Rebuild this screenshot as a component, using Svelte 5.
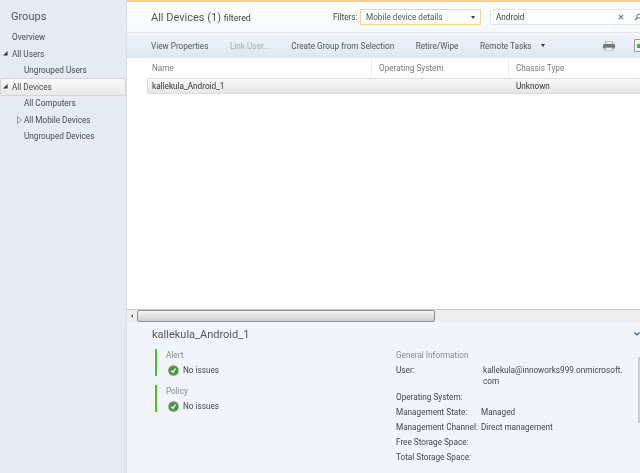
<script>
  const tools = ['View Properties', 'Link User...', 'Create Group from Selection', 'Retire/Wipe', 'Remote Tasks'];
</script>

<div class="app">
  <aside class="side">
    <h2>Groups</h2>
    <ul>
      <li class="l0 noarrow">Overview</li>
      <li class="l0"><svg class="tri" viewBox="0 0 6 6"><path d="M0 5.500 5.500 5.500 5.500 0Z" fill="#333"/></svg>All Users</li>
      <li class="l1">Ungrouped Users</li>
      <li class="l0 sel"><svg class="tri" viewBox="0 0 6 6"><path d="M0 5.500 5.500 5.500 5.500 0Z" fill="#333"/></svg>All Devices</li>
      <li class="l1">All Computers</li>
      <li class="l1 exp"><svg class="tri2" viewBox="0 0 5 8"><path d="M.5.5 4.500 4 .5 7.500Z" fill="#fff" stroke="#777" stroke-width=".8"/></svg>All Mobile Devices</li>
      <li class="l1">Ungrouped Devices</li>
    </ul>
  </aside>

  <main class="main">
    <header class="head">
      <div class="title">All Devices (1) <small>filtered</small></div>
      <div class="filters">
        <span class="flabel">Filters:</span>
        <div class="select"><span>Mobile device details</span><i class="caret"></i></div>
        <div class="search">
          <span>Android</span>
          <svg class="x" viewBox="0 0 7 7"><path d="M1 1 6 6M6 1 1 6" stroke="#3f78b8" stroke-width="1.200"/></svg>
          <svg class="mag" viewBox="0 0 9 9"><circle cx="5.500" cy="3.500" r="2.300" fill="none" stroke="#3f78b8" stroke-width="1.100"/><path d="M4 5 1 8" stroke="#3f78b8" stroke-width="1.400"/></svg>
        </div>
      </div>
    </header>

    <nav class="bar">
      {#each tools as t}
        <span class="tool" class:off={t === 'Link User...'}>{t}</span>
      {/each}
      <i class="caret dark"></i>
      <div class="icons">
        <svg class="print" viewBox="0 0 12 10">
          <rect x="2.500" y="0" width="7" height="3.500" fill="#e8e8e8" stroke="#888" stroke-width=".6"/>
          <rect x="0" y="3" width="12" height="4.500" rx="1" fill="#777"/>
          <rect x="2.500" y="6.500" width="7" height="3.500" fill="#eee" stroke="#999" stroke-width=".6"/>
        </svg>
        <svg class="xl" viewBox="0 0 10 13">
          <path d="M.5.5H9.500V12.500H.5Z" fill="#f4f4f4" stroke="#999"/>
          <rect x="3" y="5" width="7" height="4" fill="#4fb04a"/>
        </svg>
      </div>
    </nav>

    <section class="grid">
      <div class="cols">
        <div class="c name">Name</div>
        <div class="c os">Operating System</div>
        <div class="c ch">Chassis Type</div>
      </div>
      <div class="row">
        <div class="name">kallekula_Android_1</div>
        <div class="os"></div>
        <div class="ch">Unknown</div>
      </div>
    </section>

    <div class="hscroll">
      <span class="larr"></span>
      <div class="thumb"></div>
    </div>

    <section class="detail">
      <span class="chev"><svg viewBox="0 0 6 4"><path d="M.5.5 3 3 5.500.5" fill="none" stroke="#2a5a94" stroke-width="1.200"/></svg></span>
      <h3>kallekula_Android_1</h3>
      <div class="dcols">
        <div class="statuses">
          {#each ['Alert', 'Policy'] as s}
            <div class="status">
              <div class="slabel">{s}</div>
              <div class="sval">
                <svg class="ok" viewBox="0 0 12 12">
                  <circle cx="6" cy="6" r="5.800" fill="#7d8b7d"/>
                  <circle cx="6" cy="6" r="4.300" fill="#3f9c35"/>
                  <path d="M3.800 6 5.500 8 8.200 3.800" fill="none" stroke="#fff" stroke-width="1.400"/>
                </svg>
                No issues
              </div>
            </div>
          {/each}
        </div>
        <div class="info">
          <div class="slabel gi">General Information</div>
          <div class="kv user"><span class="k">User:</span><span class="v u">kallekula@innoworks999.onmicrosoft.<br />com</span></div>
          <div class="kv"><span class="k">Operating System:</span></div>
          <div class="kv"><span class="k">Management State:</span><span class="v">Managed</span></div>
          <div class="kv"><span class="k">Management Channel:</span><span class="v">Direct management</span></div>
          <div class="kv"><span class="k">Free Storage Space:</span></div>
          <div class="kv"><span class="k">Total Storage Space:</span></div>
        </div>
        <div class="vscroll"></div>
      </div>
    </section>
  </main>
</div>

<style>
  :global(body) { margin: 0; overflow: hidden; }
  .app {
    width: 640px; height: 473px; display: flex; overflow: hidden;
    font-family: Roboto, "Open Sans", sans-serif; font-size: 8.200px; color: #444;
    background: #fff; filter: blur(0.3px);
  }
  .side {
    width: 126px; flex: none; background: #e4ebf4; border-right: 1px solid #d4dce6;
    padding-top: 9px; box-sizing: content-box;
  }
  .side h2 { margin: 0 0 0 11px; font-weight: 400; font-size: 11px; line-height: 15px; color: #555; }
  .side ul { list-style: none; margin: 5px 0 0; padding: 0; }
  .side li { height: 16.500px; line-height: 16px; white-space: nowrap; position: relative; color: #4a4a4a; }
  .l0 { padding-left: 12px; }
  .l1 { padding-left: 24px; }
  .sel {
    margin-left: 1px; margin-right: 1px; padding-left: 11px; border-radius: 2px;
    background: linear-gradient(#fafafa, #e9e9e9); box-shadow: 0 0 0 1px #d2d6da;
  }
  .tri { position: absolute; left: 3px; top: 5px; width: 5px; height: 5px; }
  .sel .tri { left: 2px; }
  .tri2 { position: absolute; left: 17px; top: 4px; width: 5px; height: 8px; }

  .main { flex: 1; min-width: 0; display: flex; flex-direction: column; overflow: hidden; }
  .head {
    height: 30px; flex: none; border-top: 2px solid #fbcd85; border-bottom: 1px solid #dfe3e8;
    background: linear-gradient(#fff, #f5f8fc);
    display: flex; align-items: center; padding-left: 24px;
  }
  .title { font-size: 11px; color: #555; width: 182px; flex: none; white-space: nowrap; }
  .title small { font-size: 8.800px; color: #444; }
  .filters { display: flex; align-items: center; flex: none; }
  .flabel { width: 27px; color: #444; }
  .select {
    width: 109px; height: 14px; border: 1px solid #fbd08e; background: #fff; display: flex;
    align-items: center; justify-content: space-between; padding: 0 5px; color: #555;
  }
  .search {
    margin-left: 9px; width: 175px; height: 14px; border: 1px solid #e0e4ea; border-radius: 2px; background: #fff;
    display: flex; align-items: center; padding-left: 5px; color: #444; position: relative;
  }
  .x { position: absolute; left: 127px; top: 4px; width: 6px; height: 6px; }
  .mag { position: absolute; left: 143px; top: 3px; width: 8px; height: 8px; }
  .caret { width: 0; height: 0; border: 2.500px solid transparent; border-top: 3px solid #444; border-bottom: 0; display: block; }

  .bar {
    height: 25px; flex: none; display: flex; align-items: center; padding-left: 24px; color: #555;
    background: linear-gradient(#f2f6fb, #dbe6f3);
  }
  .tool { margin-right: 21.500px; white-space: nowrap; }
  .tool:nth-of-type(5) { margin-right: 9px; }
  .off { color: #aaa; }
  .caret.dark { border-top-color: #333; }
  .icons { margin-left: auto; display: flex; align-items: center; gap: 19px; margin-right: -4px; }
  .print { width: 12px; height: 10px; }
  .xl { width: 10px; height: 13px; }

  .grid { flex: 1; min-height: 0; padding: 0 0 0 20px; }
  .cols { display: flex; height: 20px; line-height: 21px; color: #777; }
  .c { box-sizing: border-box; border-right: 1px solid #e8ecf1; }
  .name { width: 225px; padding-left: 5px; box-sizing: border-box; flex: none; }
  .os { width: 137px; padding-left: 7px; box-sizing: border-box; flex: none; }
  .ch { padding-left: 7px; flex: 1; border-right: 0; }
  .row {
    display: flex; height: 14px; line-height: 14px; color: #333;
    margin-right: -1px; border: 1px solid #dcdcdc; border-radius: 2px; background: linear-gradient(#f8f8f8, #e6e6e6);
  }
  .row .name { padding-left: 4px; width: 224px; }
  .row .os { width: 137px; }

  .hscroll {
    height: 12px; flex: none; background: #eeeeee; border-top: 1px solid #c8c8c8;
    display: flex; align-items: stretch;
  }
  .larr { width: 0; height: 0; margin: 4px 0 0 4px; border: 2px solid transparent; border-right: 2px solid #555; border-left: 0; display: block; }
  .thumb {
    margin-left: 4px; width: 298px; border: 1px solid #8f8f8f; border-radius: 2px; box-sizing: border-box;
    background: linear-gradient(#f4f4f4, #d0d0d0);
  }

  .detail { height: 151px; flex: none; background: #f1f5fb; position: relative; padding: 5px 0 0 25px; box-sizing: border-box; }
  .chev { position: absolute; right: 0; top: 10px; width: 6px; height: 4px; display: block; }
  .chev svg { display: block; width: 6px; height: 4px; }
  h3 { margin: 0; font-weight: 400; font-size: 11px; line-height: 15px; color: #555; }
  .dcols { display: flex; margin-top: 7px; position: relative; }
  .statuses { width: 241px; flex: none; margin-left: 3px; display: flex; flex-direction: column; gap: 9px; }
  .status { border-left: 2px solid #4cc02a; height: 27px; padding-left: 9px; }
  .slabel { color: #888; line-height: 12px; }
  .sval { display: flex; align-items: center; gap: 4px; line-height: 14px; color: #444; margin-top: 2px; margin-left: 2px; }
  .ok { width: 11px; height: 11px; flex: none; }
  .info { width: 235px; flex: none; }
  .gi { margin-bottom: 4px; }
  .kv { display: flex; line-height: 11px; padding-bottom: 4px; color: #444; }
  .kv.user { padding-bottom: 5px; }
  .k { width: 85px; flex: none; white-space: nowrap; }
  .user .k { width: 87px; }
  .v { white-space: nowrap; }
  .vscroll { position: absolute; right: 0; top: 8px; width: 2px; height: 66px; background: #c8ccd2; }
</style>
